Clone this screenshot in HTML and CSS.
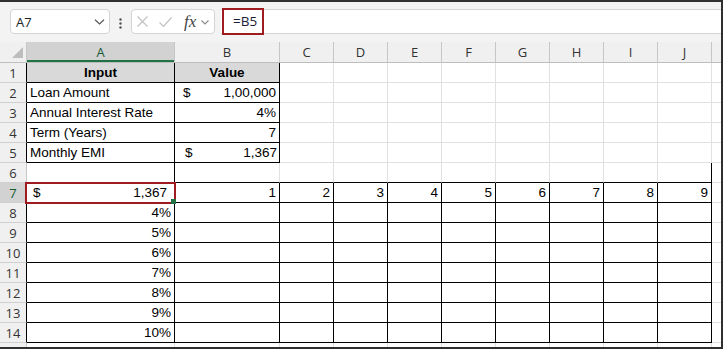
FILE: index.html
```html
<!DOCTYPE html>
<html>
<head>
<meta charset="utf-8">
<link rel="stylesheet" href="styles.css">
</head>
<body>
<div class="frame">
  <div class="fbar">
    <div class="namebox">
      <span class="nb-text">A7</span>
      <svg class="nb-chev" width="11" height="6" viewBox="0 0 11 6"><path d="M1 0.8l4.5 4.2 4.5-4.2" stroke="#555" fill="none" stroke-width="1.2"/></svg>
    </div>
    <svg class="dots" width="3" height="11" viewBox="0 0 3 11"><circle cx="1.5" cy="1.5" r="1.2" fill="#555"/><circle cx="1.5" cy="5.5" r="1.2" fill="#555"/><circle cx="1.5" cy="9.5" r="1.2" fill="#555"/></svg>
    <div class="fnbox">
      <svg class="ic-x" width="11" height="11" viewBox="0 0 11 11"><path d="M0.5 0.5l10 10M10.5 0.5l-10 10" stroke="#c2c2c2" stroke-width="1.2" fill="none"/></svg>
      <svg class="ic-ok" width="13" height="10" viewBox="0 0 13 10"><path d="M0.5 5.5l4 4 8-9" stroke="#c2c2c2" stroke-width="1.2" fill="none"/></svg>
      <span class="fx">fx</span>
      <svg class="ic-chev" width="8" height="5" viewBox="0 0 8 5"><path d="M0.5 0.5l3.5 3.5 3.5-3.5" stroke="#8a8a8a" stroke-width="1.1" fill="none"/></svg>
    </div>
    <div class="finput"><span class="formula">=B5</span></div>
  </div>

  <div class="sheet">
    <!-- header row -->
    <div class="corner"><svg width="27" height="20" viewBox="0 0 27 20"><path d="M23 5V16H12Z" fill="#bdbdbd"/></svg></div>
    <div class="h sel">A</div><div class="h">B</div><div class="h">C</div><div class="h">D</div><div class="h">E</div><div class="h">F</div><div class="h">G</div><div class="h">H</div><div class="h">I</div><div class="h">J</div><div class="h end"></div>

    <!-- row 1 -->
    <div class="rh">1</div>
    <div class="c br bb fill b ctr">Input</div><div class="c br bb fill b ctr">Value</div>
    <div class="c"></div><div class="c"></div><div class="c"></div><div class="c"></div><div class="c"></div><div class="c"></div><div class="c"></div><div class="c"></div><div class="c end"></div>

    <!-- row 2 -->
    <div class="rh">2</div>
    <div class="c br bb">Loan Amount</div><div class="c br bb acc acc1"><span>$</span><span>1,00,000</span></div>
    <div class="c"></div><div class="c"></div><div class="c"></div><div class="c"></div><div class="c"></div><div class="c"></div><div class="c"></div><div class="c"></div><div class="c end"></div>

    <!-- row 3 -->
    <div class="rh">3</div>
    <div class="c br bb">Annual Interest Rate</div><div class="c br bb r">4%</div>
    <div class="c"></div><div class="c"></div><div class="c"></div><div class="c"></div><div class="c"></div><div class="c"></div><div class="c"></div><div class="c"></div><div class="c end"></div>

    <!-- row 4 -->
    <div class="rh">4</div>
    <div class="c br bb">Term (Years)</div><div class="c br bb r">7</div>
    <div class="c"></div><div class="c"></div><div class="c"></div><div class="c"></div><div class="c"></div><div class="c"></div><div class="c"></div><div class="c"></div><div class="c end"></div>

    <!-- row 5 -->
    <div class="rh">5</div>
    <div class="c br bb">Monthly EMI</div><div class="c br bb acc acc2"><span>$</span><span>1,367</span></div>
    <div class="c"></div><div class="c"></div><div class="c"></div><div class="c"></div><div class="c"></div><div class="c"></div><div class="c"></div><div class="c"></div><div class="c end"></div>

    <!-- row 6 -->
    <div class="rh g">6</div>
    <div class="c br bb"></div><div class="c bb"></div>
    <div class="c bb"></div><div class="c bb"></div><div class="c bb"></div><div class="c bb"></div><div class="c bb"></div><div class="c bb"></div><div class="c bb"></div><div class="c bb br"></div><div class="c end"></div>

    <!-- row 7 -->
    <div class="rh sel">7</div>
    <div class="c br bb acc acc3"><span>$</span><span>1,367</span></div><div class="c br bb r">1</div>
    <div class="c br bb r">2</div><div class="c br bb r">3</div><div class="c br bb r">4</div><div class="c br bb r">5</div><div class="c br bb r">6</div><div class="c br bb r">7</div><div class="c br bb r">8</div><div class="c br bb r">9</div><div class="c end"></div>

    <!-- row 8 -->
    <div class="rh">8</div>
    <div class="c br bb r">4%</div><div class="c br bb"></div>
    <div class="c br bb"></div><div class="c br bb"></div><div class="c br bb"></div><div class="c br bb"></div><div class="c br bb"></div><div class="c br bb"></div><div class="c br bb"></div><div class="c br bb"></div><div class="c end"></div>

    <!-- row 9 -->
    <div class="rh">9</div>
    <div class="c br bb r">5%</div><div class="c br bb"></div>
    <div class="c br bb"></div><div class="c br bb"></div><div class="c br bb"></div><div class="c br bb"></div><div class="c br bb"></div><div class="c br bb"></div><div class="c br bb"></div><div class="c br bb"></div><div class="c end"></div>

    <!-- row 10 -->
    <div class="rh">10</div>
    <div class="c br bb r">6%</div><div class="c br bb"></div>
    <div class="c br bb"></div><div class="c br bb"></div><div class="c br bb"></div><div class="c br bb"></div><div class="c br bb"></div><div class="c br bb"></div><div class="c br bb"></div><div class="c br bb"></div><div class="c end"></div>

    <!-- row 11 -->
    <div class="rh">11</div>
    <div class="c br bb r">7%</div><div class="c br bb"></div>
    <div class="c br bb"></div><div class="c br bb"></div><div class="c br bb"></div><div class="c br bb"></div><div class="c br bb"></div><div class="c br bb"></div><div class="c br bb"></div><div class="c br bb"></div><div class="c end"></div>

    <!-- row 12 -->
    <div class="rh">12</div>
    <div class="c br bb r">8%</div><div class="c br bb"></div>
    <div class="c br bb"></div><div class="c br bb"></div><div class="c br bb"></div><div class="c br bb"></div><div class="c br bb"></div><div class="c br bb"></div><div class="c br bb"></div><div class="c br bb"></div><div class="c end"></div>

    <!-- row 13 -->
    <div class="rh">13</div>
    <div class="c br bb r">9%</div><div class="c br bb"></div>
    <div class="c br bb"></div><div class="c br bb"></div><div class="c br bb"></div><div class="c br bb"></div><div class="c br bb"></div><div class="c br bb"></div><div class="c br bb"></div><div class="c br bb"></div><div class="c end"></div>

    <!-- row 14 -->
    <div class="rh">14</div>
    <div class="c br bb r">10%</div><div class="c br bb"></div>
    <div class="c br bb"></div><div class="c br bb"></div><div class="c br bb"></div><div class="c br bb"></div><div class="c br bb"></div><div class="c br bb"></div><div class="c br bb"></div><div class="c br bb"></div><div class="c end"></div>

    <!-- partial row 15 -->
    <div class="rh g p"></div>
    <div class="c p"></div><div class="c p"></div><div class="c p"></div><div class="c p"></div><div class="c p"></div><div class="c p"></div><div class="c p"></div><div class="c p"></div><div class="c p"></div><div class="c p"></div><div class="c p end"></div>

    <div class="selbox"></div>
    <div class="handle"></div>
  </div>
</div>
</body>
</html>
```

FILE: styles.css
```css
* { box-sizing: border-box; }
html, body { margin: 0; padding: 0; background: #fff; }

.frame {
  width: 723px;
  height: 349px;
  border-top: 2px solid #2f2f2f;
  border-right: 2px solid #2f2f2f;
  border-bottom: 2px solid #2f2f2f;
  background: #f3f3f3;
  overflow: hidden;
}

/* formula bar */
.fbar {
  height: 40px;
  display: flex;
  align-items: flex-start;
  padding: 7px 0 0 10px;
  font-family: "Open Sans", "Noto Sans", sans-serif;
}
.namebox {
  width: 100px;
  height: 25px;
  background: #fff;
  border: 1px solid #d4d4d4;
  border-radius: 4px;
  display: flex;
  align-items: center;
  justify-content: space-between;
  padding: 0 4px 0 5px;
}
.nb-text { font-size: 13px; color: #222; }
.dots { margin: 9px 0 0 9px; }
.fnbox {
  width: 84px;
  height: 25px;
  margin-left: 9px;
  background: #fff;
  border: 1px solid #d4d4d4;
  border-radius: 4px;
  display: flex;
  align-items: center;
  padding-left: 5px;
}
.ic-ok { margin-left: 11px; }
.fx {
  margin-left: 12px;
  font-family: "Liberation Serif", "DejaVu Serif", serif;
  font-style: italic;
  font-size: 17px;
  color: #444;
  line-height: 1;
}
.ic-chev { margin-left: 5px; margin-top: 2px; }
.finput {
  flex: 1;
  height: 25px;
  margin-left: 6px;
  background: #fff;
  border-top: 1px solid #d4d4d4;
  border-bottom: 1px solid #d4d4d4;
  display: flex;
  align-items: center;
}
.formula {
  margin-left: 1px;
  width: 42px;
  height: 27px;
  flex: none;
  border: 2px solid #9e1c1f;
  font-size: 13.5px;
  color: #1d1d3a;
  padding-left: 9px;
  line-height: 22px;
}

/* sheet grid */
.sheet {
  position: relative;
  display: grid;
  grid-template-columns: 27px 148px 105px repeat(8, 54px) 9px;
  grid-template-rows: 21px repeat(14, 20px) 4px;
  background: #fff;
}
.corner {
  background: #f0f0f0;
  border-right: 1px solid #c6c6c6;
  border-bottom: 1px solid #bdbdbd;
}
.corner svg { display: block; }
.h {
  background: #f0f0f0;
  border-right: 1px solid #c6c6c6;
  border-bottom: 1px solid #bdbdbd;
  text-align: center;
  font-family: "Open Sans", "Noto Sans", sans-serif;
  font-size: 13px;
  line-height: 20px;
  color: #333;
}
.h.sel {
  background: #d2d2d2;
  color: #145a32;
  box-shadow: inset 0 -2px 0 #217346;
}
.h.end { border-right: none; }

.rh {
  background: #f0f0f0;
  border-right: 1px solid #000;
  border-bottom: 1px solid #d0d0d0;
  text-align: center;
  font-family: "Open Sans", "Noto Sans", sans-serif;
  font-size: 13px;
  line-height: 20px;
  color: #333;
}
.rh.g { border-right-color: #c6c6c6; }
.rh.sel { background: #d2d2d2; color: #145a32; }
.rh.p { border-bottom: none; }

.c {
  border-right: 1px solid #e1e1e1;
  border-bottom: 1px solid #e1e1e1;
  font-family: "Liberation Sans", Arial, sans-serif;
  font-size: 13.5px;
  line-height: 18px;
  padding: 1px 3px 0 3px;
  color: #000;
  white-space: nowrap;
  overflow: hidden;
}
.c.end { border-right: none; }
.c.p { border-bottom: none; }
.br { border-right-color: #000; }
.bb { border-bottom-color: #000; }
.r { text-align: right; }
.ctr { text-align: center; }
.b { font-weight: bold; }
.fill { background: #d9d9d9; }

.acc { display: flex; justify-content: space-between; }
.acc1 { padding-left: 8px; padding-right: 3px; }
.acc2 { padding-left: 10px; padding-right: 2px; }
.acc3 { padding-left: 6px; padding-right: 7px; }

.selbox {
  position: absolute;
  left: 25px;
  top: 140px;
  width: 151px;
  height: 22px;
  border: 2px solid #9e1c1f;
}
.handle {
  position: absolute;
  left: 171px;
  top: 157px;
  width: 5px;
  height: 5px;
  background: #217346;
}
```
